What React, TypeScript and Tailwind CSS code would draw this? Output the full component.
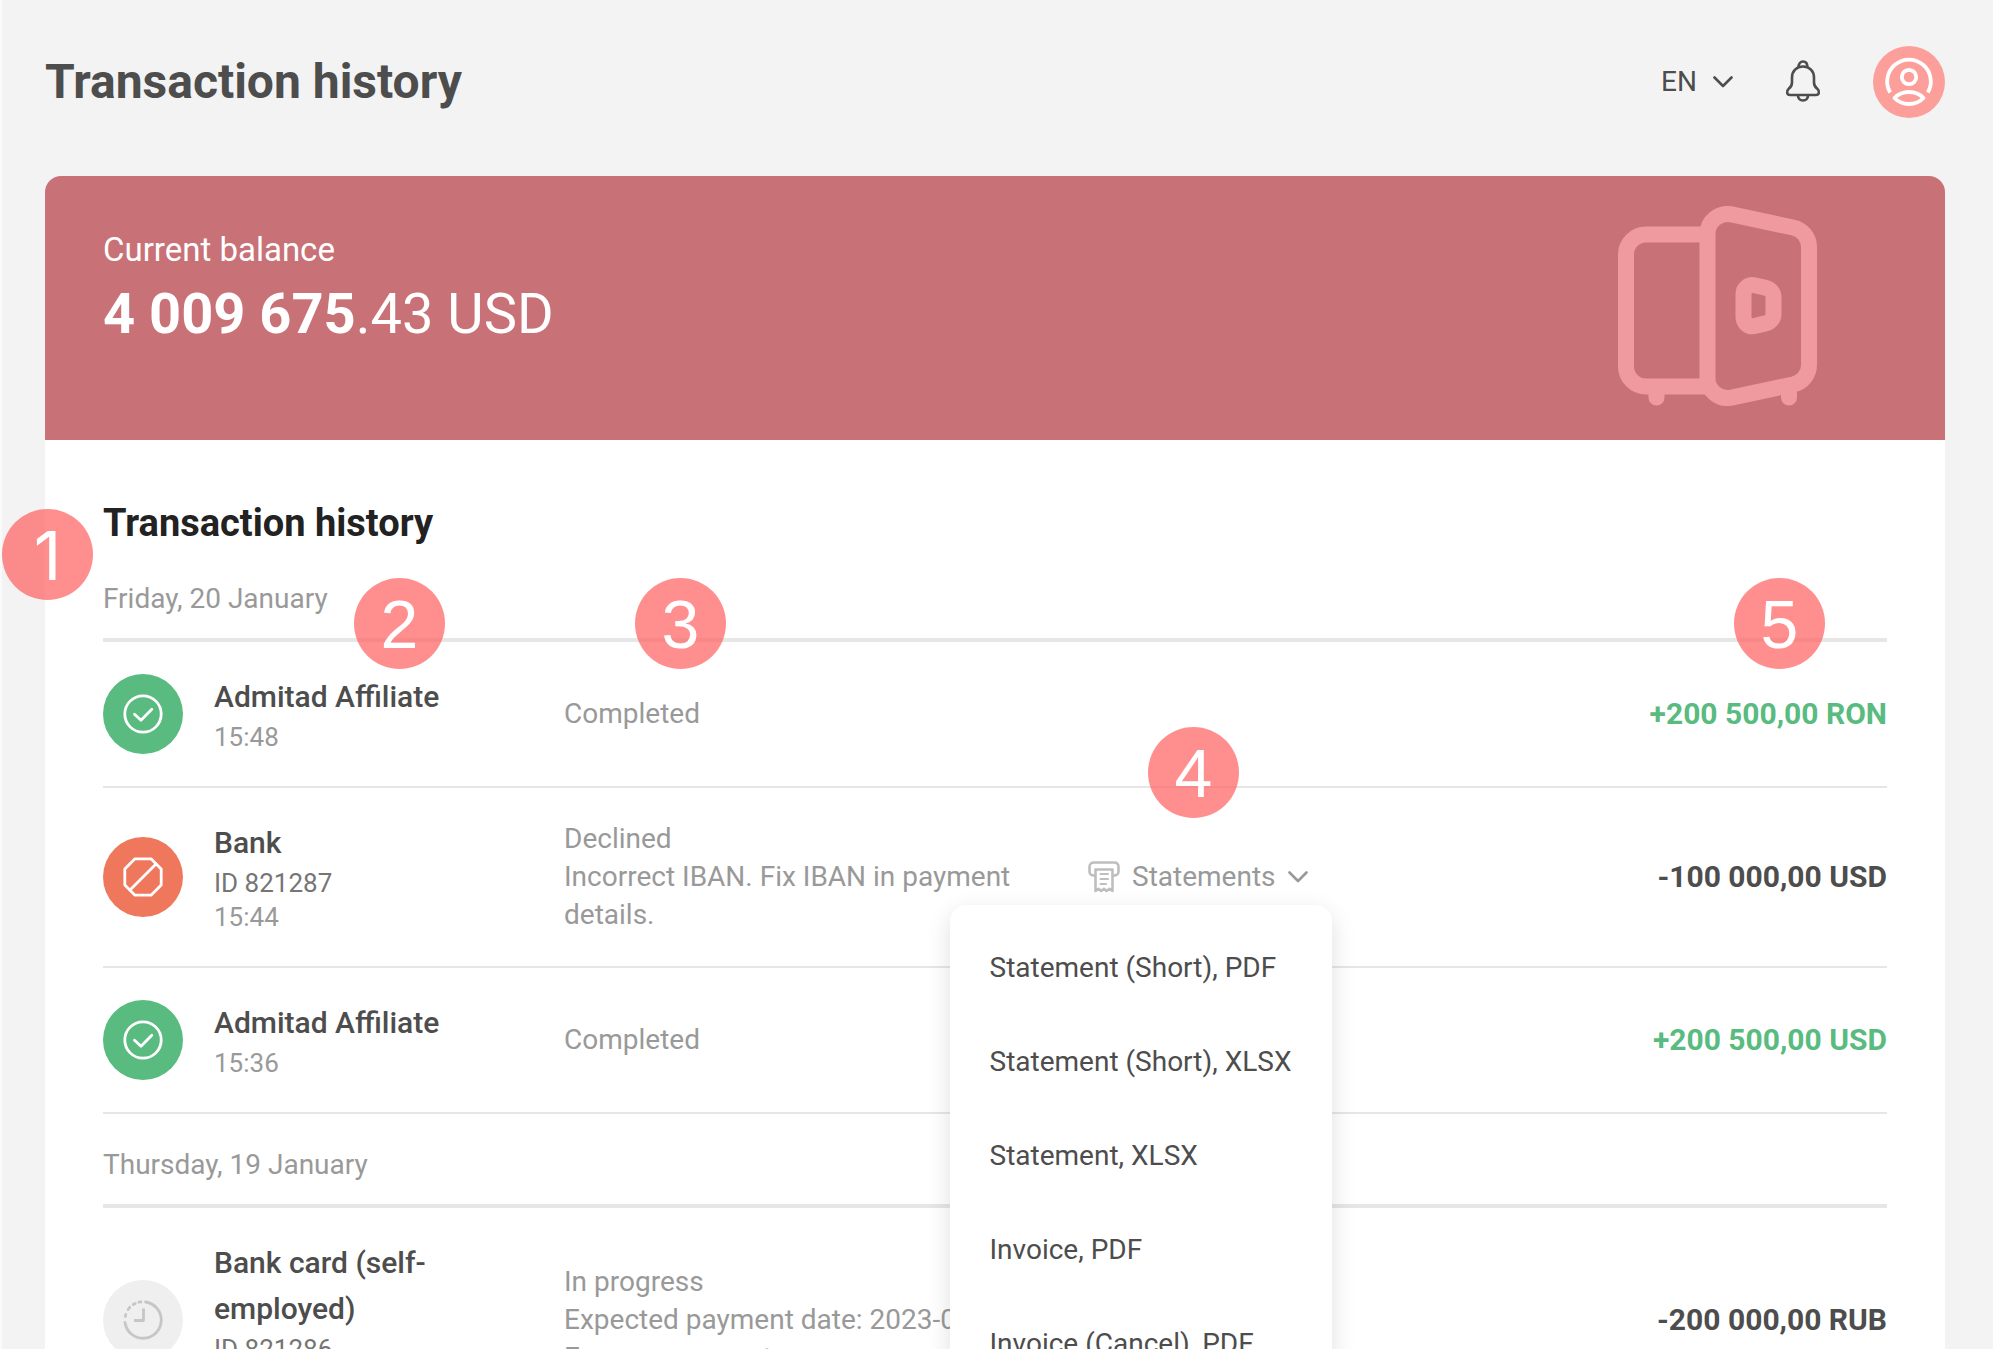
import { useState } from 'react';

type Status = 'completed' | 'declined' | 'progress';

interface Transaction {
  name: string;
  id?: string;
  time: string;
  status: Status;
  details: string[];
  amount: string;
  income?: boolean;
  hasStatements?: boolean;
}

interface Day {
  date: string;
  transactions: Transaction[];
}

const days: Day[] = [
  {
    date: 'Friday, 20 January',
    transactions: [
      { name: 'Admitad Affiliate', time: '15:48', status: 'completed', details: ['Completed'], amount: '+200 500,00 RON', income: true },
      {
        name: 'Bank',
        id: 'ID 821287',
        time: '15:44',
        status: 'declined',
        details: ['Declined', 'Incorrect IBAN. Fix IBAN in payment details.'],
        amount: '-100 000,00 USD',
        hasStatements: true,
      },
      { name: 'Admitad Affiliate', time: '15:36', status: 'completed', details: ['Completed'], amount: '+200 500,00 USD', income: true },
    ],
  },
  {
    date: 'Thursday, 19 January',
    transactions: [
      {
        name: 'Bank card (self-employed)',
        id: 'ID 821286',
        time: '12:10',
        status: 'progress',
        details: ['In progress', 'Expected payment date: 2023-01-25', 'Expense amount'],
        amount: '-200 000,00 RUB',
      },
    ],
  },
];

const statementOptions = [
  'Statement (Short), PDF',
  'Statement (Short), XLSX',
  'Statement, XLSX',
  'Invoice, PDF',
  'Invoice (Cancel), PDF',
];

function Chevron() {
  return (
    <svg width="20" height="12" viewBox="0 0 20 12" fill="none" stroke="currentColor" strokeWidth="2.6" strokeLinecap="round" strokeLinejoin="round" aria-hidden="true">
      <path d="M1.5 1.5 10 10l8.5-8.5" />
    </svg>
  );
}

function BellIcon() {
  return (
    <svg width="36" height="44" viewBox="0 1 36 44" fill="none" stroke="currentColor" strokeWidth="2.6" strokeLinejoin="round" aria-hidden="true">
      <path d="M18 7.5C11.5 7.5 7 12 7 18.5V23.5C7 26.5 5.5 28.5 3.5 30C1.2 32 1.8 36 5 36H31C34.2 36 34.8 32 32.5 30C30.5 28.5 29 26.5 29 23.5V18.5C29 12 24.5 7.5 18 7.5Z" />
      <path d="M13.5 8.5c0-4 2-6 4.5-6s4.5 2 4.5 6" />
      <path d="M13 36.5c0 3 2 5 5 5s5-2 5-5" />
    </svg>
  );
}

function AvatarIcon() {
  return (
    <svg width="72" height="72" viewBox="0 0 72 72" fill="none" stroke="currentColor" strokeWidth="3.8" strokeLinejoin="round" aria-hidden="true">
      <path d="M17.2 46.5A21.8 21.8 0 1 1 54.8 46.5" />
      <circle cx="36" cy="31" r="7.2" />
      <path d="M21.5 52C29 44 43 44 50.5 52C43 60 29 60 21.5 52Z" />
    </svg>
  );
}

function SafeIcon() {
  return (
    <svg width="200" height="200" viewBox="0 0 200 200" fill="none" stroke="currentColor" strokeWidth="16" strokeLinecap="round" strokeLinejoin="round" aria-hidden="true">
      <path strokeLinecap="butt" d="M90 28.5H28A20 20 0 0 0 8 48.5V160.5A20 20 0 0 0 28 180.5H92" />
      <path d="M89.5 28A20 20 0 0 1 113.5 8.4L175 21.5A20 20 0 0 1 191 41V159A20 20 0 0 1 175 178.5L113.5 191.6A20 20 0 0 1 89.5 172Z" />
      <path d="M125.5 88A9 9 0 0 1 136.5 79.2L147.5 81.8A9.5 9.5 0 0 1 155.5 91V108A9.5 9.5 0 0 1 147.5 117.4L136.5 120A9 9 0 0 1 125.5 111Z" />
      <path d="M38.5 184V191.5M171 184V191.5" />
    </svg>
  );
}

function ReceiptIcon() {
  return (
    <svg className="text-[#bebebe]" width="32" height="32" viewBox="0 0 32 32" fill="none" stroke="currentColor" strokeWidth="2.6" strokeLinecap="round" strokeLinejoin="round" aria-hidden="true">
      <path d="M7 14.5H6C3 14.5 1.5 12.5 1.5 10.5V6C1.5 3 3.5 1.5 6 1.5H26C28.5 1.5 30.5 3 30.5 6V10.5C30.5 12.5 29 14.5 26 14.5H25" />
      <path d="M7.5 30V8.5H24.5V30L21.5 27.8L18.5 30L16 27.8L13.2 30L10.5 27.8Z" />
      <path strokeWidth="2" d="M12.5 13H20M12.5 18H20M12.5 23H18" />
    </svg>
  );
}

const statusColors: Record<Status, string> = {
  completed: 'bg-[#59bb80] text-white',
  declined: 'bg-[#ef775b] text-white',
  progress: 'bg-[#efefef] text-[#c6c6c6]',
};

function StatusIcon({ status }: { status: Status }) {
  return (
    <div className={`size-20 rounded-full ${statusColors[status]}`}>
      <svg className="size-20" viewBox="0 0 80 80" fill="none" stroke="currentColor" strokeWidth="2.8" strokeLinecap="round" strokeLinejoin="round" role="img" aria-label={status}>
        {status === 'completed' && (
          <>
            <circle cx="40" cy="40" r="18.2" />
            <path d="M31.5 40.2 38 46.2 48.8 35.3" />
          </>
        )}
        {status === 'declined' && (
          <>
            <path d="M32 21.8H48L58.2 32V48L48 58.2H32L21.8 48V32Z" />
            <path d="M53 27 27 53" />
          </>
        )}
        {status === 'progress' && (
          <>
            <path d="M42.5 22A18.2 18.2 0 1 1 22 42.5" />
            <path d="M22.3 36.5 22.8 34.5M25.2 29.5 26.8 27.3M30.2 24.6 32.2 23.5M36 22.2 38 21.9" />
            <path strokeLinecap="butt" d="M40.5 28.5V40.5H31" />
          </>
        )}
      </svg>
    </div>
  );
}

function StatementsMenu() {
  const [open, setOpen] = useState(true);

  return (
    <div className="relative w-fit">
      <button
        type="button"
        onClick={() => setOpen(!open)}
        aria-expanded={open}
        className="flex items-center gap-3 text-[28px] leading-[38px] text-[#999999]"
      >
        <ReceiptIcon />
        <span>Statements</span>
        <Chevron />
      </button>
      {open && (
        <ul className="absolute -right-6 top-full z-10 mt-[9px] w-[382px] rounded-2xl bg-white py-4 shadow-[0_8px_24px_rgba(0,0,0,0.13)]">
          {statementOptions.map((option) => (
            <li key={option}>
              <button type="button" className="w-full px-10 py-7 text-left text-[28px] leading-[38px] text-[#4d4d4d] hover:bg-gray-50">
                {option}
              </button>
            </li>
          ))}
        </ul>
      )}
    </div>
  );
}

function TransactionRow({ transaction }: { transaction: Transaction }) {
  const border = 'border-b-2 border-[#e6e6e6]';

  return (
    <tr>
      <td className={`py-8 ${border}`}>
        <StatusIcon status={transaction.status} />
      </td>
      <td className={`py-8 pr-16 ${border}`}>
        <p className="text-[30px] leading-[46px] font-medium text-[#4d4d4d]">{transaction.name}</p>
        {transaction.id && <p className="text-[26px] leading-[34px] text-[#757575]">{transaction.id}</p>}
        <p className="text-[26px] leading-[34px] text-[#999999]">{transaction.time}</p>
      </td>
      <td className={`text-[28px] leading-[38px] text-[#999999] ${border}`}>
        {transaction.details.map((line) => (
          <p key={line}>{line}</p>
        ))}
      </td>
      <td className={border}>{transaction.hasStatements && <StatementsMenu />}</td>
      <td className={`text-right text-[30px] leading-[38px] font-bold ${transaction.income ? 'text-[#59bb80]' : 'text-[#4d4d4d]'} ${border}`}>
        {transaction.amount}
      </td>
    </tr>
  );
}

// Numbered pins that point at parts of the page.
const markers = [
  { label: 1, position: 'left-[-43px] top-[333px]', font: "font-['Inter',sans-serif]" },
  { label: 2, position: 'left-[309px] top-[402px]', font: "font-['Liberation_Sans',sans-serif]" },
  { label: 3, position: 'left-[590px] top-[402px]', font: "font-['Liberation_Sans',sans-serif]" },
  { label: 4, position: 'left-[1103px] top-[551px]', font: "font-['Liberation_Sans',sans-serif]" },
  { label: 5, position: 'right-[120px] top-[402px]', font: "font-['Liberation_Sans',sans-serif]" },
];

export default function App() {
  return (
    <div className="h-screen overflow-hidden border-l-2 border-[#fafafa] bg-[#f3f3f3] pr-12 pl-[43px] font-['Roboto',sans-serif]">
      <header className="flex items-center justify-between pt-[46px] pb-[58px]">
        <h1 className="text-[48px] leading-[72px] font-bold text-[#4d4d4d]">Transaction history</h1>
        <div className="flex items-center gap-13 text-[#4d4d4d]">
          <div className="relative flex items-center">
            <label htmlFor="language" className="sr-only">Language</label>
            <select id="language" className="w-[72px] appearance-none bg-transparent text-[28px] leading-[38px]">
              <option>EN</option>
              <option>RU</option>
              <option>DE</option>
            </select>
            <span className="pointer-events-none absolute right-0">
              <Chevron />
            </span>
          </div>
          <button type="button" aria-label="Notifications">
            <BellIcon />
          </button>
          <button type="button" aria-label="Profile" className="rounded-full bg-[#fc9f9b] text-white">
            <AvatarIcon />
          </button>
        </div>
      </header>

      <main className="relative rounded-t-2xl bg-white">
        <section className="flex items-start justify-between rounded-t-2xl bg-[#c87277] px-[58px] pt-[30px] pb-[34px]">
          <div className="pt-[25px] text-white">
            <p className="text-[33px] leading-[38px]">Current balance</p>
            <p className="mt-2 text-[56px] leading-[74px]">
              <span className="font-bold">4 009 675</span>.43 USD
            </p>
          </div>
          <div className="mr-[69px] text-[#ee9a9f]">
            <SafeIcon />
          </div>
        </section>

        <section className="px-[58px] pt-[58px]">
          <h2 className="text-[38px] leading-[50px] font-bold text-[#222222]">Transaction history</h2>
          <table className="w-full table-fixed border-separate border-spacing-0">
            <colgroup>
              <col className="w-[111px]" />
              <col className="w-[350px]" />
              <col className="w-[524px]" />
              <col className="w-[300px]" />
              <col />
            </colgroup>
            {days.map((day) => (
              <tbody key={day.date}>
                <tr>
                  <th colSpan={5} className="border-b-4 border-[#e6e6e6] pt-8 pb-5 text-left text-[28px] leading-[38px] font-normal text-[#999999]">
                    {day.date}
                  </th>
                </tr>
                {day.transactions.map((transaction) => (
                  <TransactionRow key={transaction.time} transaction={transaction} />
                ))}
              </tbody>
            ))}
          </table>
        </section>

        {markers.map((marker) => (
          <span
            key={marker.label}
            className={`absolute flex size-[91px] items-center justify-center rounded-full bg-[#ff5f5f]/70 text-[68px] leading-none text-white ${marker.font} ${marker.position}`}
          >
            {marker.label}
          </span>
        ))}
      </main>
    </div>
  );
}
